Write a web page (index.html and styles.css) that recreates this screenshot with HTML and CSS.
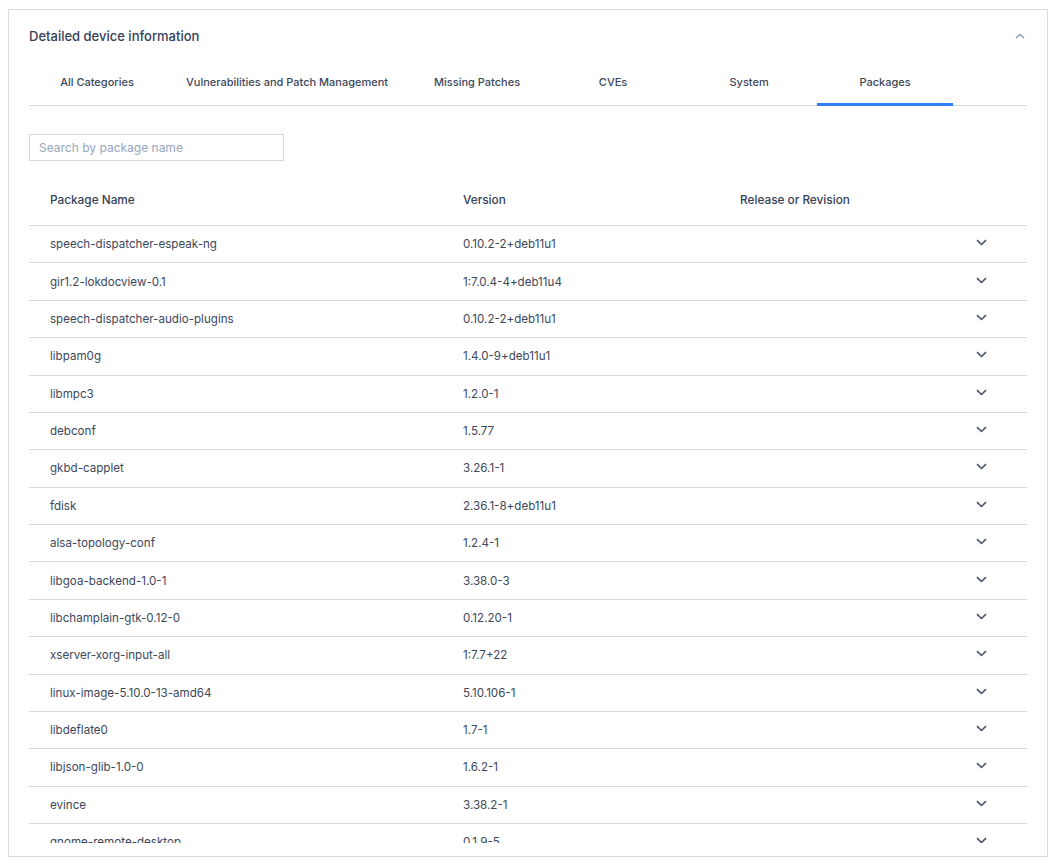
FILE: index.html
```html
<!DOCTYPE html>
<html lang="en">
<head>
    <meta charset="UTF-8">
    <title>Detailed device information</title>
    <link rel="stylesheet" href="styles.css">
</head>
<body>
    <div class="card">
        <div class="card-header">
            <h2>Detailed device information</h2>
            <svg class="collapse-icon" width="10" height="6" viewBox="0 0 10 6"><path d="M1 5 L5 1.5 L9 5" fill="none" stroke="#8e99ab" stroke-width="1.4"/></svg>
        </div>

        <div class="tabs">
            <div class="tab">All Categories</div>
            <div class="tab">Vulnerabilities and Patch Management</div>
            <div class="tab">Missing Patches</div>
            <div class="tab">CVEs</div>
            <div class="tab">System</div>
            <div class="tab active">Packages</div>
        </div>

        <input class="search" type="text" placeholder="Search by package name">

        <div class="table">
            <div class="row head">
                <div>Package Name</div>
                <div>Version</div>
                <div>Release or Revision</div>
                <div></div>
            </div>
            <div class="rows" id="rows"></div>
        </div>
    </div>

    <script>
        let packages = [
            ["speech-dispatcher-espeak-ng", "0.10.2-2+deb11u1"],
            ["gir1.2-lokdocview-0.1", "1:7.0.4-4+deb11u4"],
            ["speech-dispatcher-audio-plugins", "0.10.2-2+deb11u1"],
            ["libpam0g", "1.4.0-9+deb11u1"],
            ["libmpc3", "1.2.0-1"],
            ["debconf", "1.5.77"],
            ["gkbd-capplet", "3.26.1-1"],
            ["fdisk", "2.36.1-8+deb11u1"],
            ["alsa-topology-conf", "1.2.4-1"],
            ["libgoa-backend-1.0-1", "3.38.0-3"],
            ["libchamplain-gtk-0.12-0", "0.12.20-1"],
            ["xserver-xorg-input-all", "1:7.7+22"],
            ["linux-image-5.10.0-13-amd64", "5.10.106-1"],
            ["libdeflate0", "1.7-1"],
            ["libjson-glib-1.0-0", "1.6.2-1"],
            ["evince", "3.38.2-1"],
            ["gnome-remote-desktop", "0.1.9-5"]
        ];

        let chevron = '<svg width="11" height="7" viewBox="0 0 11 7"><path d="M1 1.2 L5.5 5.5 L10 1.2" fill="none" stroke="#47536a" stroke-width="1.6"/></svg>';
        let rows = document.getElementById("rows");
        packages.forEach(p => {
            let row = document.createElement("div");
            row.className = "row";
            row.innerHTML = "<div>" + p[0] + "</div><div>" + p[1] + "</div><div></div><div class='chev'>" + chevron + "</div>";
            rows.appendChild(row);
        });
    </script>
</body>
</html>
```

FILE: styles.css
```css
body {
    margin: 0;
    padding: 9px 4px 0 8px;
    background: #ffffff;
    font-family: 'Inter', 'Noto Sans', sans-serif;
    color: #3c475a;
}

.card {
    height: 848px;
    box-sizing: border-box;
    border: 1px solid #d5dae4;
    padding: 16px 20px 13px 20px;
    display: flex;
    flex-direction: column;
}

.card-header {
    display: flex;
    justify-content: space-between;
    align-items: center;
    height: 20px;
}

.card-header h2 {
    margin: 0;
    font-size: 13px;
    font-weight: 500;
    color: #344158;
}

.collapse-icon {
    margin-right: 2px;
}

.tabs {
    display: flex;
    margin-top: 14px;
    border-bottom: 1px solid #d5d9e4;
}

.tab {
    min-width: 94px;
    padding: 15px 21px 13px;
    line-height: 15px;
    font-size: 11px;
    font-weight: 500;
    color: #3c475a;
    text-align: center;
    border-bottom: 3px solid transparent;
    margin-bottom: -1px;
}

.tab.active {
    border-bottom-color: #2f7cf6;
}

.search {
    margin-top: 28px;
    width: 255px;
    height: 27px;
    box-sizing: border-box;
    border: 1px solid #d5d9e4;
    border-radius: 0;
    padding: 0 9px;
    font-family: inherit;
    font-size: 12px;
    outline: none;
}

.search::placeholder {
    color: #97a6bf;
}

.table {
    margin-top: 14px;
    flex: 1;
    display: flex;
    flex-direction: column;
    min-height: 0;
}

.rows {
    flex: 1;
    overflow: hidden;
}

.row {
    display: grid;
    grid-template-columns: 413px 277px 1fr 40px;
    padding-right: 26px;
    align-items: center;
    height: 37.375px;
    box-sizing: border-box;
    border-top: 1px solid #d5d9e4;
    font-size: 11.6px;
    color: #3c475a;
}

.row > div {
    padding-left: 21px;
}

.row > div.chev {
    padding-left: 0;
}

.row.head {
    height: 50px;
    border-top: none;
    font-size: 11.8px;
    font-weight: 500;
    color: #344158;
}

.chev {
    display: flex;
    justify-content: center;
    padding-bottom: 3px;
}
```
